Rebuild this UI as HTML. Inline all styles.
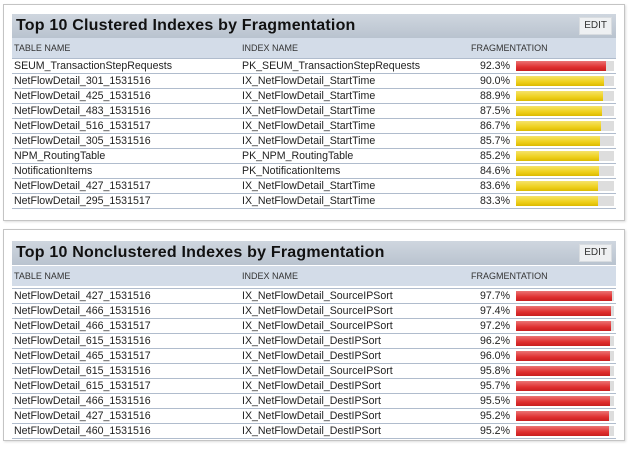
<!DOCTYPE html>
<html><head><style>
body{margin:0;width:628px;height:451px;background:#fff;font-family:"Liberation Sans",sans-serif;position:relative;overflow:hidden}
.p{position:absolute;left:3px;width:620px;border:1px solid #c4c4c4;box-shadow:1px 1px 2px #ddd}
.t{position:absolute;left:8px;right:8px;height:24px;background:linear-gradient(#cfd6df,#b9c3cf);}
.t b{position:absolute;left:4px;top:3px;font-size:16px;color:#111;letter-spacing:0.2px}
.e{position:absolute;right:4px;top:3px;height:16px;line-height:16px;padding:0 4px;background:#eef0f2;border:1px solid #d8dce0;font-size:10px;color:#333}
.h{position:absolute;left:8px;right:8px;height:20px;background:#d3dce8;font-size:9px;color:#333}
.h span,.r span{position:absolute}
.r{position:absolute;left:8px;right:8px;height:15px;border-top:1px solid #b0bccd;font-size:10.6px;color:#222;line-height:15px}
.c1{left:2px}.c2{left:230px}.c3{left:459px}
.pc{right:106px}
.tr{position:absolute;left:504px;top:2px;width:98px;height:10px;background:#ddd}
.f{height:10px}
.red{background:linear-gradient(#ea7373,#e03030 60%,#c82020)}
.yel{background:linear-gradient(#f5e26a,#efd01c 60%,#dcba00)}
</style></head><body>
<div class="p" style="top:4px;height:215px">
 <div class="t" style="top:9px"><b>Top 10 Clustered Indexes by Fragmentation</b><div class="e">EDIT</div></div>
 <div class="h" style="top:33px"><span class="c1" style="top:5px">TABLE NAME</span><span class="c2" style="top:5px">INDEX NAME</span><span class="c3" style="top:5px">FRAGMENTATION</span></div>
</div>
<div class="p" style="top:229px;height:210px">
 <div class="t" style="top:11px"><b>Top 10 Nonclustered Indexes by Fragmentation</b><div class="e">EDIT</div></div>
 <div class="h" style="top:36px"><span class="c1" style="top:5px">TABLE NAME</span><span class="c2" style="top:5px">INDEX NAME</span><span class="c3" style="top:5px">FRAGMENTATION</span></div>
</div>
<div id="rows"></div>
<script>
var a=[["SEUM_TransactionStepRequests","PK_SEUM_TransactionStepRequests",92.3],
["NetFlowDetail_301_1531516","IX_NetFlowDetail_StartTime",90.0],
["NetFlowDetail_425_1531516","IX_NetFlowDetail_StartTime",88.9],
["NetFlowDetail_483_1531516","IX_NetFlowDetail_StartTime",87.5],
["NetFlowDetail_516_1531517","IX_NetFlowDetail_StartTime",86.7],
["NetFlowDetail_305_1531516","IX_NetFlowDetail_StartTime",85.7],
["NPM_RoutingTable","PK_NPM_RoutingTable",85.2],
["NotificationItems","PK_NotificationItems",84.6],
["NetFlowDetail_427_1531517","IX_NetFlowDetail_StartTime",83.6],
["NetFlowDetail_295_1531517","IX_NetFlowDetail_StartTime",83.3]];
var b=[["NetFlowDetail_427_1531516","IX_NetFlowDetail_SourceIPSort",97.7],
["NetFlowDetail_466_1531516","IX_NetFlowDetail_SourceIPSort",97.4],
["NetFlowDetail_466_1531517","IX_NetFlowDetail_SourceIPSort",97.2],
["NetFlowDetail_615_1531516","IX_NetFlowDetail_DestIPSort",96.2],
["NetFlowDetail_465_1531517","IX_NetFlowDetail_DestIPSort",96.0],
["NetFlowDetail_615_1531516","IX_NetFlowDetail_SourceIPSort",95.8],
["NetFlowDetail_615_1531517","IX_NetFlowDetail_DestIPSort",95.7],
["NetFlowDetail_466_1531516","IX_NetFlowDetail_DestIPSort",95.5],
["NetFlowDetail_427_1531516","IX_NetFlowDetail_DestIPSort",95.2],
["NetFlowDetail_460_1531516","IX_NetFlowDetail_DestIPSort",95.2]];
var h="";
function g(d,top,mid){d.forEach(function(x,i){var w=Math.round(98*x[2]/100);
h+='<div class="r" style="top:'+(top+i*15)+'px;left:12px;width:604px"><span class="c1">'+x[0]+'</span><span class="c2">'+x[1]+'</span><span class="pc">'+x[2].toFixed(1)+'%</span><div class="tr"><div class="f '+(x[2]>mid?'red':'yel')+'" style="width:'+w+'px"></div></div></div>';});}
g(a,58,91);g(b,288,91);
h+='<div style="position:absolute;left:12px;width:604px;top:208px;border-top:1px solid #b0bccd"></div>';
h+='<div style="position:absolute;left:12px;width:604px;top:438px;border-top:1px solid #b0bccd"></div>';
document.getElementById("rows").innerHTML=h;
</script>
</body></html>
